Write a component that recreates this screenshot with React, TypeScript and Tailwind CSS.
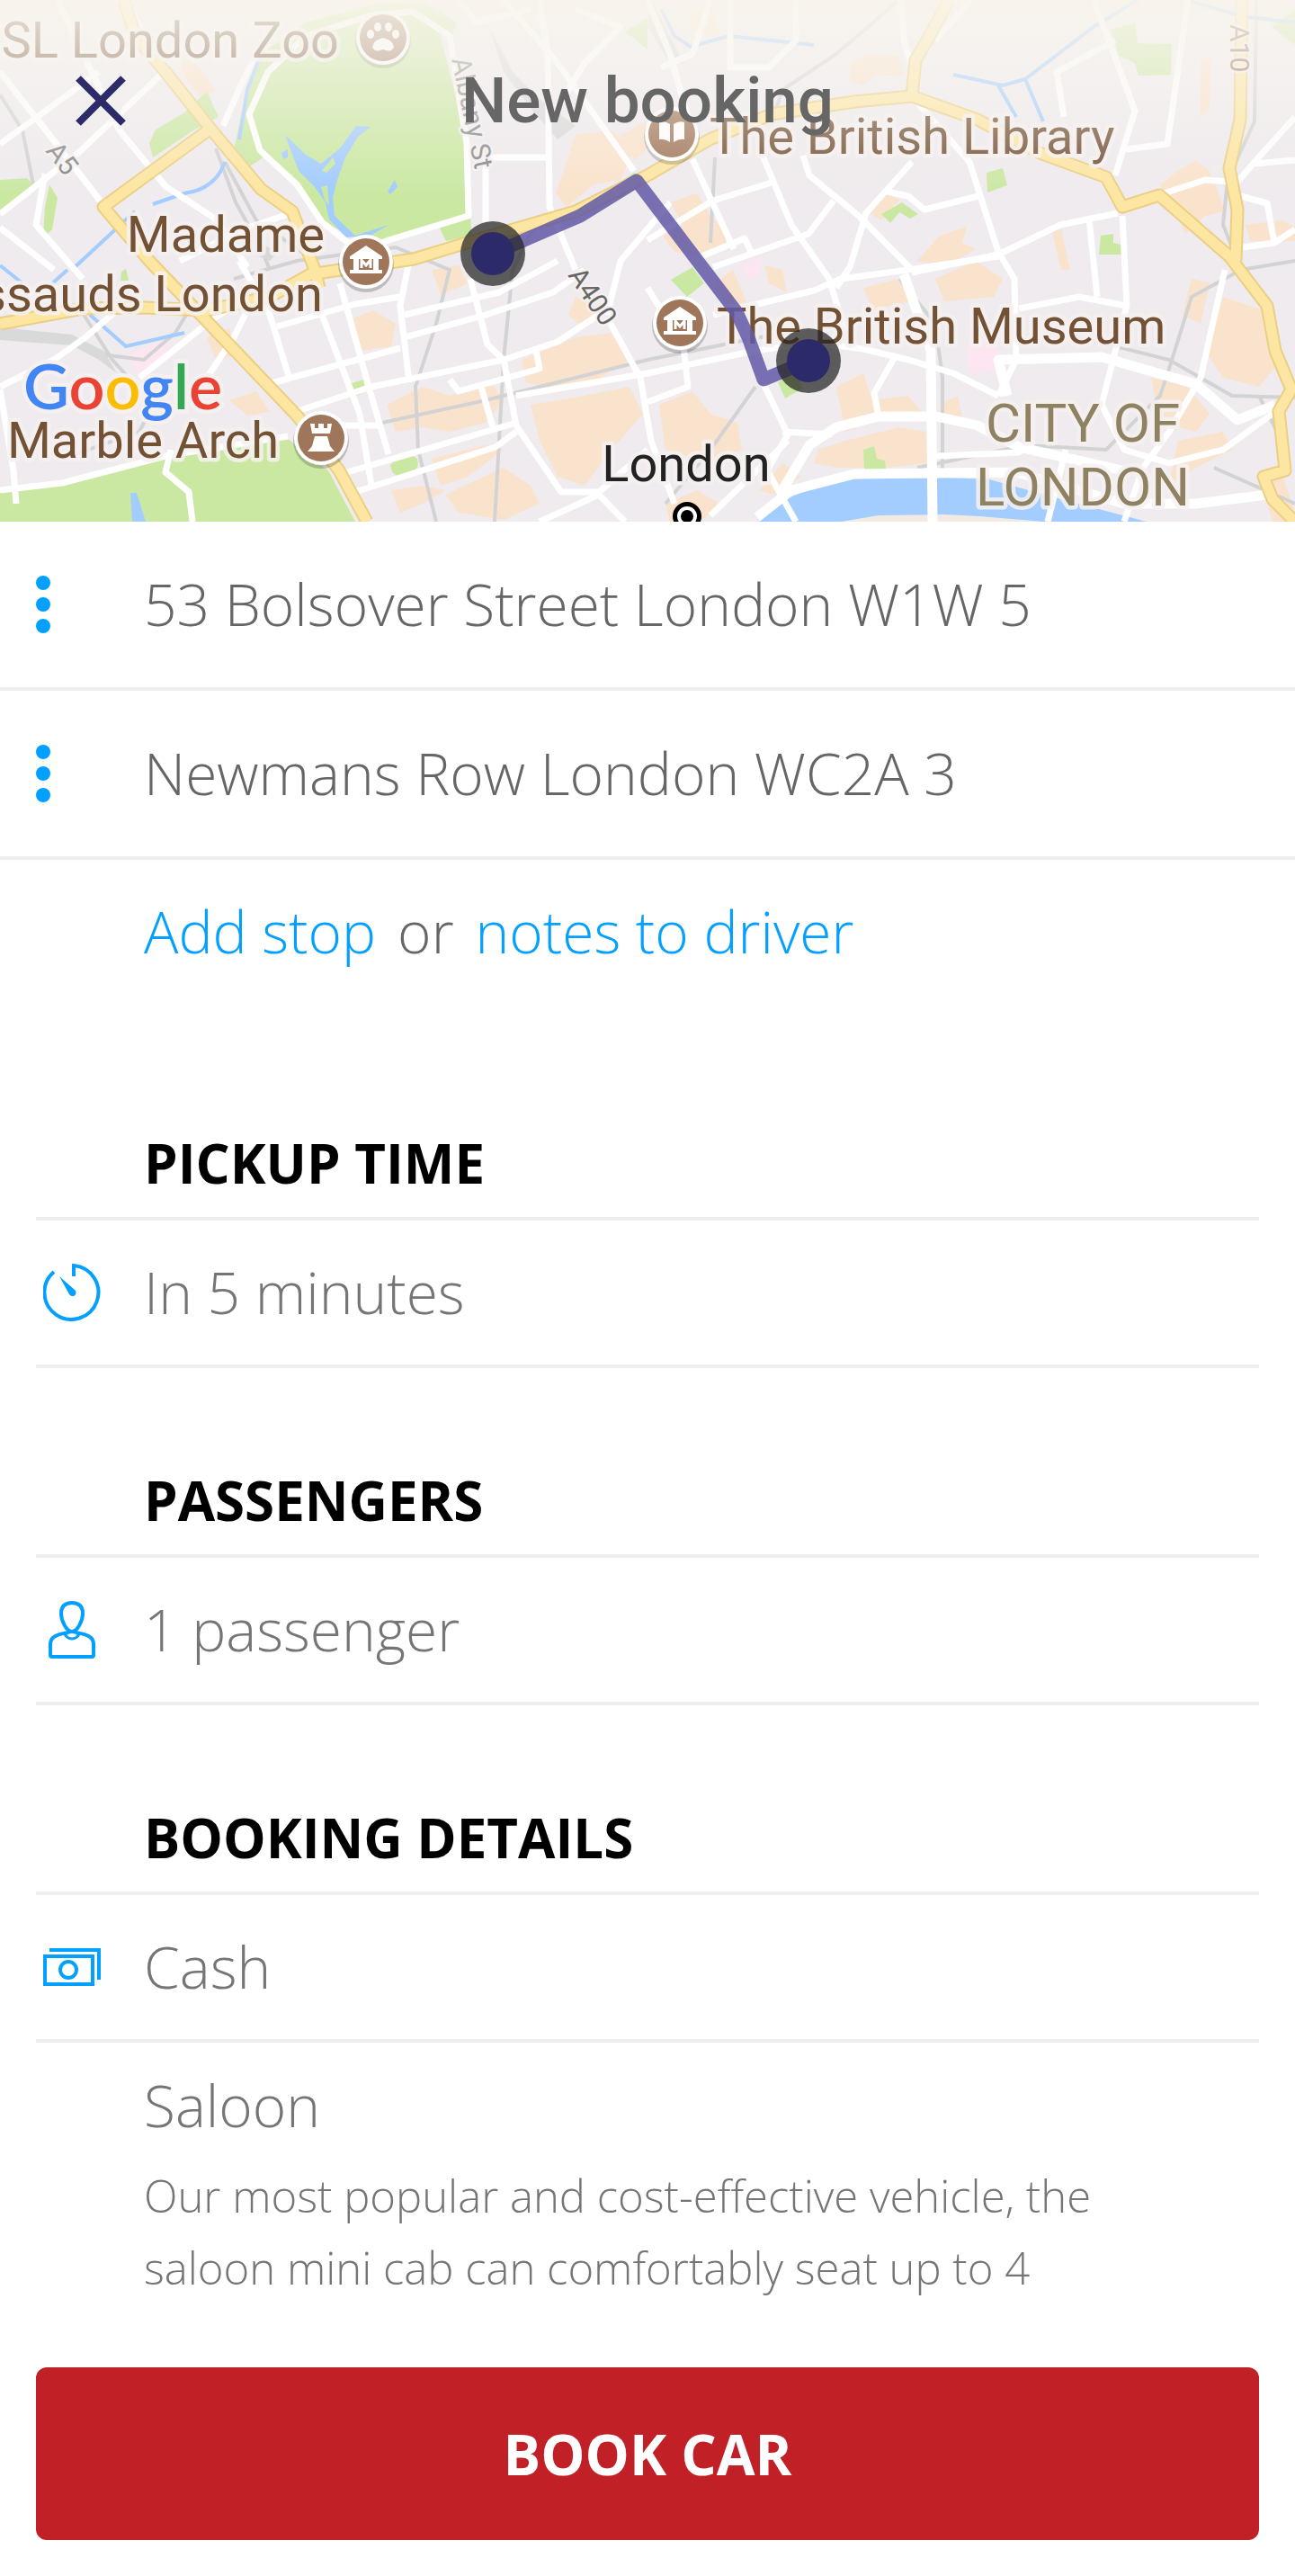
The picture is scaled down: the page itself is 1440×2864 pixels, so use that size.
import type { ReactNode } from "react";

const stops = ["53 Bolsover Street London W1W 5", "Newmans Row London WC2A 3"];

const parks = [
  "M257 180 L270 120 L290 60 L340 25 L420 4 L470 2 L508 25 L500 45 L480 30 L440 20 L400 25 L330 60 L290 100 L275 130 L289 167 L293 175 L270 190 Z",
  "M489 37 L505 100 L517 160 L523 240 L432 267 L395 263 L358 247 L330 205 L289 167 L277 127 L298 80 L349 33 L413 17 L459 13 Z",
  "M230 102 L243 130 L215 145 L170 175 L166 160 L172 145 L205 125 Z",
  "M0 200 L30 198 L42 210 L0 236 Z",
  "M55 205 L64 220 L58 255 L48 265 L50 230 Z",
  "M488 252 L523 242 L525 262 L496 268 Z",
  "M0 547 L69 537 L184 507 L320 488 L365 523 L395 580 L0 580 Z",
  "M1235 32 L1262 26 L1265 48 L1303 49 L1302 83 L1266 84 L1262 70 L1244 62 Z",
  "M1097 192 L1115 187 L1120 206 L1098 214 Z",
  "M980 238 L1003 225 L1021 238 L1012 243 L1000 236 L990 248 Z",
  "M1224 262 L1238 260 L1238 270 L1248 272 L1247 283 L1222 283 Z",
  "M746 311 L770 297 L783 315 L764 330 Z",
  "M865 425 L885 412 L892 432 L873 443 Z",
  "M960 500 L972 496 L975 510 L984 512 L985 522 L961 522 Z",
  "M386 428 L404 422 L407 436 L390 442 Z",
  "M434 517 Q450 500 464 510 Q468 524 450 529 Q436 532 434 517 Z",
  "M135 302 L140 299 L143 312 L134 312 Z",
  "M1414 30 L1440 10 V50 Z M695 35 L720 20 V55 Z",
  "M670 215 L705 192 L720 200 L690 220 Z",
];

const blocks = [
  "M200 65 L220 72 L240 100 L225 110 L205 85 Z",
  "M640 150 L680 145 L705 165 L690 200 L660 205 L630 230 L618 215 Z",
  "M690 150 L718 135 L720 165 L706 178 Z",
  "M765 35 L800 40 L795 5 L770 10 Z",
  "M945 70 L965 60 L1000 62 L1005 85 L975 83 L960 95 L945 90 Z",
  "M745 225 L775 215 L790 240 L805 255 L808 275 L775 285 L750 280 L737 262 L760 250 Z",
  "M965 235 L985 215 L1000 222 L980 245 Z",
  "M1020 290 L1045 262 L1075 252 L1070 270 L1085 277 L1050 297 Z",
  "M1170 258 L1180 255 L1190 300 L1180 300 Z",
  "M1310 190 L1330 178 L1345 190 L1355 215 L1362 235 L1340 240 L1318 260 L1305 230 L1290 205 Z",
  "M1335 65 L1347 65 L1345 120 L1335 130 Z",
  "M1385 250 L1425 245 L1440 252 V268 L1390 268 Z",
  "M390 355 L415 345 L440 360 L435 385 L400 390 Z",
  "M480 300 L510 295 L520 315 L490 328 Z",
  "M430 450 L470 430 L500 440 L545 425 L560 445 L540 470 L500 480 L470 475 L440 480 Z",
  "M580 400 L640 375 L680 370 L700 400 L660 425 L610 430 L585 425 Z",
  "M590 450 L650 440 L700 430 L715 460 L680 500 L650 540 L620 530 L600 490 Z",
  "M480 510 L540 495 L560 500 L520 530 L490 540 Z",
  "M435 545 L470 540 L495 545 L470 560 L445 570 Z",
  "M495 550 L560 520 L590 540 L600 560 L560 578 L510 570 Z",
  "M255 445 L285 435 L300 458 L275 462 Z",
  "M230 375 L255 365 L262 395 L240 400 Z",
  "M640 330 L670 345 L650 365 L632 350 Z",
  "M795 315 L815 300 L830 335 L810 345 Z",
  "M850 295 L870 300 L875 325 L855 315 Z",
  "M960 320 L1000 310 L1012 335 L970 345 Z",
  "M1040 310 L1085 290 L1115 310 L1105 330 L1050 335 Z",
  "M733 450 L770 435 L790 460 L820 470 L825 500 L790 515 L740 500 Z",
  "M930 430 L960 415 L970 445 L1010 440 L1025 458 L980 462 L940 480 Z",
  "M910 500 L940 490 L1000 475 L1030 480 L1032 515 L985 520 L930 520 L905 515 Z",
  "M845 545 L870 515 L890 530 L860 550 Z",
  "M1045 450 L1065 440 L1070 465 L1048 463 Z",
  "M1280 420 L1320 430 L1345 460 L1330 480 L1290 470 Z",
  "M1310 490 L1360 480 L1370 500 L1330 520 L1300 540 Z",
  "M1360 330 L1405 345 L1425 400 L1400 430 L1360 420 L1340 390 Z",
  "M1325 310 L1345 315 L1335 360 L1315 350 Z",
  "M1400 530 L1425 525 L1440 570 V580 L1415 580 Z",
  "M740 560 L775 545 L800 560 L780 580 L745 580 Z",
];

const rails = [
  "M0 105 L25 145 L38 210",
  "M240 165 L262 225 L290 275 L300 300",
  "M250 180 L285 245 L350 290",
  "M0 370 L80 378 L120 395 L160 400 L195 370 L210 345",
  "M90 345 L125 400 L170 450 L155 480 L70 510",
  "M260 310 L330 290 L440 275 L500 300 L485 360 L462 430 L465 500 L485 580",
  "M600 240 L570 300 L560 400 L550 580",
  "M425 470 L540 445 L720 400 L870 370",
  "M1000 0 L930 60 L870 100 L858 135",
  "M795 175 L790 270",
  "M1000 310 L1040 360 L1048 420 L1048 580",
  "M840 430 L790 500 L740 560",
  "M1020 520 L1140 495 L1230 500 L1290 440 L1300 410 L1325 330 L1380 300 L1440 290",
  "M1397 0 L1395 135 L1365 200 L1360 250 L1372 280",
  "M1180 370 L1300 400 L1370 440 L1440 442",
  "M1225 560 L1200 580 M1350 520 L1440 560 M1400 440 L1430 500",
];

const canals = [
  "M290 60 L275 100 L266 155",
  "M250 180 Q240 210 205 215 L170 227",
  "M150 235 L80 300 M100 350 L140 385 L205 370",
  "M0 295 L25 315 M55 318 L75 300",
  "M735 10 L750 40 L768 52 L810 40 L905 50",
  "M1060 83 L1115 95 L1140 88 L1216 30 L1265 0 M1110 95 L1130 130 M1140 88 L1160 135",
  "M1320 0 L1380 18 L1440 25",
];

const streets = [
  "M0 80 L55 150 L119 233",
  "M110 80 L0 160",
  "M179 83 L87 170 L0 238",
  "M64 0 L133 145 L184 207 L239 243 L275 297",
  "M50 193 L40 250 L92 310",
  "M0 253 L60 300",
  "M184 80 L140 0 M330 235 L270 255 L200 290",
  "M290 50 L270 90 L248 140",
  "M500 40 L519 160 L521 240 L432 267 L400 280 L358 247 L330 205 L289 167 L277 127 L298 80 L340 40 L413 17 L459 13 L485 30 Z",
  "M540 247 V175 H611",
  "M600 0 L609 60 L611 230 L640 300",
  "M510 0 L530 25 L590 10 M620 120 L650 70 L690 30 L640 10",
  "M560 0 L620 70 L705 190",
  "M745 225 L690 290 L675 350",
  "M720 0 L745 60 L765 130 M790 0 L770 60 L735 75",
  "M848 173 L880 250 L922 310 L940 370",
  "M893 173 L900 195 L955 240 L1014 300",
  "M720 267 L793 223 L858 203",
  "M793 297 L899 260 L927 223",
  "M770 177 L816 277 M780 285 L828 265 L835 280",
  "M1014 107 L1078 180 L1110 280 L1128 310 L1130 400 L1110 440",
  "M1014 180 L963 237 L945 297 L930 320",
  "M986 213 L1010 218 L1028 233 L1092 217",
  "M1014 303 L1110 283 L1179 250 L1243 237",
  "M1211 243 L1220 330",
  "M1216 0 L1262 123 L1240 195",
  "M1321 0 L1298 160 L1252 166",
  "M1240 45 L1175 80 L1183 130",
  "M1294 215 L1340 200 L1367 202",
  "M1440 130 L1395 180 L1372 207 M1395 182 L1440 178",
  "M1376 217 L1409 226 L1417 270 L1382 275 M1417 270 L1440 255",
  "M812 0 V75 H855 L885 45 V0",
  "M1002 0 L1005 45 L1014 75 M1080 0 L1040 45",
  "M0 430 L60 400 L95 375 L130 345",
  "M0 433 L15 523 L18 560",
  "M266 290 L300 350 L321 418",
  "M308 363 L395 338 L445 330",
  "M358 350 L400 460 L413 540 M378 315 L410 430 L432 505",
  "M455 290 L445 340 L455 425",
  "M298 427 L445 387",
  "M331 457 L413 430 L560 400 L620 380 L666 350",
  "M450 350 L555 325 L620 290",
  "M450 375 L540 350 L615 325 L650 300",
  "M523 310 L542 383 L560 400 L574 473 L624 547 L666 547 L720 500",
  "M574 440 L720 415 L830 392 L900 380 L960 388 L1010 400 L1060 415 L1110 440",
  "M675 353 L712 420 L724 490 L750 560",
  "M595 385 L600 410 L510 435 L500 422 M535 430 L548 475",
  "M386 525 L574 470",
  "M395 547 L551 497 L574 480",
  "M600 580 L666 550 L695 580",
  "M0 545 L69 537 L184 507 L320 485 M190 500 L184 525 L210 547 L214 580",
  "M155 420 L230 360 L266 335 M230 420 L260 375 L275 345",
  "M380 473 H425",
  "M793 350 L905 323 L935 310 L1010 300 L1110 285",
  "M1133 343 L1200 330 L1253 340",
  "M1248 240 L1253 340 L1225 450 L1250 500 L1300 515 L1360 500 L1415 460",
  "M1362 300 L1335 420 L1300 480 L1271 520 L1250 580",
  "M870 480 L925 483",
  "M849 427 L876 483 L853 523 L885 580",
  "M790 573 L876 490",
  "M1041 507 L1133 503 L1150 490",
  "M995 397 L972 437 L977 463",
  "M720 447 L765 430 L760 385 L720 320",
  "M1185 500 L1165 580",
];

const avenues = [
  "M1005 305 L1035 390 L1037 580",
  "M1120 440 L1110 400 L1225 397 L1330 427 L1376 467 L1418 450",
  "M867 550 L900 495 L930 475 L977 463 L1041 463 L1087 473 L1133 497 L1248 523",
  "M842 575 L880 545 L950 527 L1130 525 L1250 560 L1330 560 L1409 550",
];

const mainRoads = [
  "M138 0 L150 40 L184 80 L234 143 L290 210 L325 235 L350 300 L355 320",
  "M234 143 L115 230 L166 290 L230 357 L331 463 L377 523 L408 580",
  "M0 360 L92 343 L160 342 L230 345 L300 330 L345 305 L460 288 L519 270 L640 235 L720 195 L789 155 L858 127 L950 113 L1014 107 L1087 133 L1156 170 L1230 197 L1248 230 L1289 217 L1367 285 L1409 340 L1418 390 L1436 433 L1422 457 L1429 523 L1405 530 L1415 555 L1440 580",
  "M1055 0 L1032 43 L1018 67 L1014 107",
  "M1381 0 L1379 133 L1367 187 L1376 233 L1374 290",
];

function Place({ x, y, children }: { x: number; y: number; children: ReactNode }) {
  return (
    <g transform={`translate(${x} ${y})`}>
      <circle r="31" cy="3" fill="#000" opacity="0.2" />
      <circle r="30" fill="#fff" />
      <circle r="26" fill="#a0765a" />
      {children}
    </g>
  );
}

function Museum() {
  return (
    <>
      <path d="M0 -18 L18 -6 V-3 H-18 V-6 Z M-14 -4 H-8 V9 H-14 Z M8 -4 H14 V9 H8 Z M-18 9 H18 V13 H-18 Z" fill="#fff" />
      <path d="M-5 7 V-2 L0 4 L5 -2 V7" fill="none" stroke="#fff" strokeWidth="3" />
    </>
  );
}

function Marker({ x, y }: { x: number; y: number }) {
  return (
    <g transform={`translate(${x} ${y})`}>
      <circle r="36" fill="#222" opacity="0.72" />
      <circle r="24" fill="#2d2a69" />
    </g>
  );
}

function RouteMap() {
  return (
    <svg
      viewBox="0 0 1440 580"
      preserveAspectRatio="xMidYMid slice"
      className="block h-[580px] w-full font-['Roboto',sans-serif] text-[56px] font-normal"
      role="img"
      aria-label="Route map"
    >
      <defs>
        <linearGradient id="fade" x1="0" y1="0" x2="0" y2="1">
          <stop offset="0" stopColor="#f9f5ec" stopOpacity="0.9" />
          <stop offset="0.25" stopColor="#f8f5ef" stopOpacity="0.7" />
          <stop offset="1" stopColor="#f8f5f2" stopOpacity="0" />
        </linearGradient>
      </defs>
      <rect width="1440" height="580" fill="#efebee" />
      <g fill="#fae3cc">
        {blocks.map((d) => (
          <path key={d} d={d} />
        ))}
      </g>
      <path
        d="M1076 380 L1108 375 L1112 412 L1078 415 Z M825 295 L848 285 L845 305 L832 312 Z M140 395 L190 375 L180 400 L155 415 Z"
        fill="#fde6f1"
      />
      <g fill="#cbe8a3">
        {parks.map((d) => (
          <path key={d} d={d} />
        ))}
      </g>
      <g fill="none" stroke="#d3d3d4" strokeWidth="4">
        {rails.map((d) => (
          <path key={d} d={d} />
        ))}
      </g>
      <path
        d="M0 364 L80 372 L115 390 L130 415 L110 400 L80 384 L0 378 Z M544 30 L570 80 L600 110 L640 140 L620 155 L590 120 L560 80 Z M725 0 L760 70 L745 70 L720 30 Z M265 260 L310 280 L300 290 L275 280 Z"
        fill="#d9d9da"
      />
      <g fill="#a3ccff">
        <path d="M844 580 L867 557 L931 533 L1028 530 L1100 533 L1180 555 L1275 580 Z" />
        <path d="M317 150 L340 172 L357 182 L378 165 L396 140 L412 141 L398 152 L384 175 L375 200 L370 220 L372 240 L395 262 L432 250 L412 262 L385 264 L366 244 L362 225 L350 208 L332 190 Z" />
        <path d="M313 170 L320 166 L320 175 L315 177 Z M439 200 L442 208 L434 216 L431 213 Z M145 548 L152 548 L162 580 L147 580 Z" />
      </g>
      <path d="M358 190 L370 175 L373 182 L363 192 Z M357 208 L364 206 L366 228 L361 222 Z" fill="#cbe8a3" />
      <path d="M935 580 L977 573 L1050 572 L1090 574 L1160 580 Z" fill="#f1ebe4" />
      <g fill="none" stroke="#a3ccff" strokeWidth="4">
        {canals.map((d) => (
          <path key={d} d={d} />
        ))}
      </g>
      <g fill="none" stroke="#fff" strokeLinejoin="round" strokeWidth="7">
        {streets.map((d) => (
          <path key={d} d={d} />
        ))}
      </g>
      <g fill="none" stroke="#fff" strokeLinejoin="round" strokeWidth="11">
        {avenues.map((d) => (
          <path key={d} d={d} />
        ))}
      </g>
      <g fill="none" stroke="#ebcf85" strokeLinejoin="round" strokeWidth="15">
        {mainRoads.map((d) => (
          <path key={d} d={d} />
        ))}
      </g>
      <g fill="none" stroke="#fde6a2" strokeLinejoin="round" strokeWidth="11">
        {mainRoads.map((d) => (
          <path key={d} d={d} />
        ))}
      </g>

      <g stroke="#f6f1f0" strokeWidth="9" strokeLinejoin="round" strokeOpacity="0.85" fill="#735135" className="[paint-order:stroke]">
        <text x="377" y="64" textAnchor="end">ZSL London Zoo</text>
        <text x="361" y="280" textAnchor="end">Madame</text>
        <text x="359" y="346" textAnchor="end">ssauds London</text>
        <text x="310" y="509" textAnchor="end">Marble Arch</text>
        <text x="789" y="171">The British Library</text>
        <text x="797" y="382">The British Museum</text>
        <text x="763" y="535" textAnchor="middle" fill="#222">London</text>
        <g fill="#8f8262" textAnchor="middle" className="text-[60px]">
          <text x="1204" y="491">CITY OF</text>
          <text x="1204" y="562">LONDON</text>
        </g>
        <g fill="#888" strokeWidth="5" className="text-[30px]">
          <text transform="translate(50 168) rotate(52)">A5</text>
          <text transform="translate(502 66) rotate(78)">Albany St</text>
          <text transform="translate(631 306) rotate(56)" fill="#666">A400</text>
          <text transform="translate(1368 27) rotate(90)" fill="#8c6a4f">A10</text>
        </g>
      </g>

      <Place x={426} y={42}>
        <path d="M-12 10 Q-10 2 0 0 Q10 2 12 10 Q10 17 0 13 Q-10 17 -12 10 Z" fill="#fff" />
        <g fill="#fff">
          <ellipse cx="-14" cy="-4" rx="4" ry="5" />
          <ellipse cx="-6" cy="-12" rx="4" ry="5" />
          <ellipse cx="6" cy="-12" rx="4" ry="5" />
          <ellipse cx="14" cy="-4" rx="4" ry="5" />
        </g>
      </Place>
      <Place x={407} y={291}>
        <Museum />
      </Place>
      <Place x={756} y={359}>
        <Museum />
      </Place>
      <Place x={357} y={487}>
        <path d="M-12 -16 H-7 V-11 H-3 V-16 H3 V-11 H7 V-16 H12 L10 -5 H-10 Z M-7 -2 H7 L10 9 L15 15 H-15 L-10 9 Z" fill="#fff" />
      </Place>
      <Place x={747} y={149}>
        <path d="M-2 -11 Q-8 -15 -14 -13 V6 Q-8 5 -2 9 Z M2 -11 Q8 -15 14 -13 V6 Q8 5 2 9 Z" fill="#fff" />
      </Place>
      <g>
        <circle cx="764" cy="574" r="16" />
        <circle cx="764" cy="574" r="11" fill="#fff" />
        <circle cx="764" cy="574" r="7" />
      </g>

      <rect width="1440" height="215" fill="url(#fade)" />

      <path
        d="M548 282 L645 240 L708 201 L819 347 L832 375 L849 422 L899 401"
        fill="none"
        stroke="#6259a6"
        strokeWidth="15"
        strokeLinejoin="round"
        opacity="0.85"
      />
      <Marker x={548} y={282} />
      <Marker x={899} y={401} />

      <text x="26" y="455" stroke="#f6f1f0" strokeWidth="9" className="font-['Lato',sans-serif] text-[70px] font-semibold [paint-order:stroke]">
        <tspan fill="#4285f4">G</tspan>
        <tspan fill="#ea4335">o</tspan>
        <tspan fill="#fbbc05">o</tspan>
        <tspan fill="#4285f4">g</tspan>
        <tspan fill="#34a853">l</tspan>
        <tspan fill="#ea4335">e</tspan>
      </text>
    </svg>
  );
}

function TimerIcon() {
  return (
    <svg viewBox="0 0 64 64" className="size-16" fill="none" stroke="#04a0ff" strokeWidth="4" aria-hidden="true">
      <path d="M34 14 V2 A30 30 0 1 1 12 9" />
      <path d="M18 14 L35 29 A4 4 0 1 1 29 34 Z" fill="#04a0ff" stroke="none" />
    </svg>
  );
}

function PersonIcon() {
  return (
    <svg viewBox="0 0 64 64" className="size-16" fill="none" stroke="#04a0ff" strokeWidth="4" aria-hidden="true">
      <path d="M32 2 C23 2 20 7 20 14 C20 22 26 34 32 34 C38 34 44 22 44 14 C44 7 41 2 32 2 Z" />
      <path d="M28 35 C15 37 8 40 8 48 V60 Q8 62 10 62 H54 Q56 62 56 60 V48 C56 40 49 37 36 35" />
      <path d="M24 37 Q32 32 40 37 Q37 42 32 42 Q27 42 24 37 Z" strokeWidth="3" />
    </svg>
  );
}

function CashIcon() {
  return (
    <svg viewBox="0 0 64 64" className="size-16" fill="none" stroke="#04a0ff" strokeWidth="4" aria-hidden="true">
      <path d="M7 13 H62 V46" />
      <rect x="2" y="20" width="53" height="31" />
      <circle cx="28" cy="35" r="9" />
    </svg>
  );
}

type FieldProps = {
  title: string;
  icon: ReactNode;
  value: string;
};

function Field({ title, icon, value }: FieldProps) {
  return (
    <section>
      <h2 className="pt-[107px] pb-5 pl-[120px] text-[60px] leading-[80px] font-bold text-black">{title}</h2>
      <button type="button" className="flex h-[168px] w-full items-center gap-12 border-y-4 border-[#eee] pl-2 text-left text-[#757575]">
        {icon}
        {value}
      </button>
    </section>
  );
}

export default function App() {
  return (
    <main className="min-h-screen bg-white font-['Open_Sans',sans-serif] text-[64px] leading-[88px] font-[340] text-[#666]">
      <header className="relative overflow-hidden">
        <RouteMap />
        <div className="absolute inset-x-0 top-0 flex h-56 items-center justify-center">
          <button type="button" aria-label="Close" className="absolute left-20 flex size-16 items-center justify-center">
            <svg viewBox="0 0 64 64" className="size-16" stroke="#2d2a69" strokeWidth="8" aria-hidden="true">
              <path d="M7 7 L57 57 M57 7 L7 57" />
            </svg>
          </button>
          <h1 className="font-['Roboto',sans-serif] text-[71px] font-medium">New booking</h1>
        </div>
      </header>

      <ul>
        {stops.map((stop) => (
          <li key={stop} className="flex h-[188px] items-center border-b-4 border-[#eee] pl-10">
            <button type="button" aria-label="Stop options" className="flex w-[120px] flex-col gap-2">
              <span className="size-4 rounded-full bg-[#04a0ff]" />
              <span className="size-4 rounded-full bg-[#04a0ff]" />
              <span className="size-4 rounded-full bg-[#04a0ff]" />
            </button>
            {stop}
          </li>
        ))}
      </ul>

      <div className="flex h-40 items-center gap-6 pl-40">
        <a href="#stop" className="text-[#04a0ff]">Add stop</a>
        <span>or</span>
        <a href="#notes" className="text-[#04a0ff]">notes to driver</a>
      </div>

      <div className="px-10 pt-[30px] pb-10">
        <Field title="PICKUP TIME" icon={<TimerIcon />} value="In 5 minutes" />
        <Field title="PASSENGERS" icon={<PersonIcon />} value="1 passenger" />
        <Field title="BOOKING DETAILS" icon={<CashIcon />} value="Cash" />

        <div className="pt-[26px] pr-32 pl-[120px] text-[#757575]">
          <h3>Saloon</h3>
          <p className="pt-4 text-[49px] leading-[80px]">
            Our most popular and cost-effective vehicle, the saloon mini cab can comfortably seat up to 4
          </p>
        </div>

        <button type="button" className="mt-[71px] h-48 w-full rounded-xl bg-[#c02026] text-[62px] font-bold text-white">
          BOOK CAR
        </button>
      </div>
    </main>
  );
}
